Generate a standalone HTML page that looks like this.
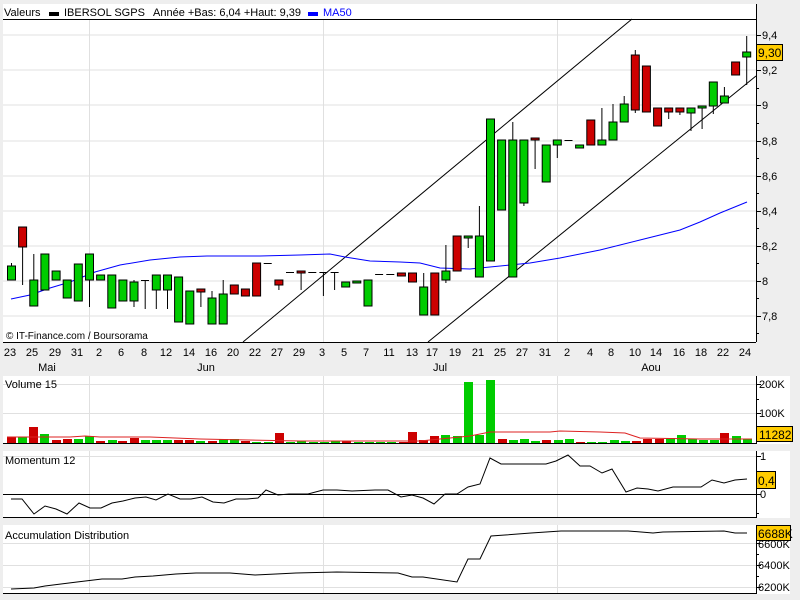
<!DOCTYPE html>
<html><head><meta charset="utf-8"><style>
html,body{margin:0;padding:0;background:#eeeeee;}
svg{display:block;font-family:"Liberation Sans",sans-serif;}
</style></head><body>
<svg width="800" height="600" xmlns="http://www.w3.org/2000/svg">
<rect width="800" height="600" fill="#eeeeee"/>
<!-- main panel -->
<rect x="3" y="4" width="753" height="338" fill="#fff"/>
<g stroke="#e0e0e0" stroke-width="1">
<line x1="3" y1="35" x2="756" y2="35"/><line x1="3" y1="70" x2="756" y2="70"/><line x1="3" y1="105" x2="756" y2="105"/>
<line x1="3" y1="141" x2="756" y2="141"/><line x1="3" y1="176" x2="756" y2="176"/><line x1="3" y1="211" x2="756" y2="211"/>
<line x1="3" y1="246" x2="756" y2="246"/><line x1="3" y1="281" x2="756" y2="281"/><line x1="3" y1="316" x2="756" y2="316"/>
<line x1="89.5" y1="20" x2="89.5" y2="342"/><line x1="323.5" y1="20" x2="323.5" y2="342"/><line x1="557.5" y1="20" x2="557.5" y2="342"/>
</g>
<text x="4" y="16" font-size="11">Valeurs</text>
<rect x="49" y="12" width="10" height="4" fill="#000"/>
<text x="64" y="16" font-size="11">IBERSOL SGPS</text>
<text x="153" y="16" font-size="11">Année +Bas: 6,04 +Haut: 9,39</text>
<rect x="308" y="12" width="10" height="4" fill="#0000ff"/>
<text x="323" y="16" font-size="11" fill="#0000ff">MA50</text>
<line x1="3" y1="19.5" x2="756" y2="19.5" stroke="#000"/>
<!-- trend lines -->
<line x1="243" y1="342" x2="632" y2="19" stroke="#000" stroke-width="1"/>
<line x1="428" y1="342" x2="756" y2="76" stroke="#000" stroke-width="1"/>
<!-- MA50 -->
<polyline fill="none" stroke="#0000ff" stroke-width="1" points="11,299 30,295 50,288 70,282 95,272 120,265 150,260 180,257 207,256 260,256 300,255 330,254 345,257 370,261 400,262 420,263 440,268 470,269 490,267 510,265 530,263 560,258 600,250 640,240 680,230 700,222 720,213 747,202"/>
<!-- candles -->
<g id="candles" stroke="#000" stroke-width="1"></g>
<g stroke="#000" stroke-width="1">
<line x1="11.5" y1="263" x2="11.5" y2="280"/><rect x="7.5" y="266" width="8" height="14" fill="#00cc00"/>
<line x1="22.6" y1="227" x2="22.6" y2="285"/><rect x="18.6" y="227" width="8" height="20" fill="#cc0000"/>
<line x1="33.8" y1="254" x2="33.8" y2="306"/><rect x="29.8" y="280" width="8" height="26" fill="#00cc00"/>
<rect x="40.9" y="254" width="8" height="36" fill="#00cc00"/>
<rect x="52.1" y="271" width="8" height="9" fill="#00cc00"/>
<rect x="63.2" y="280" width="8" height="18" fill="#00cc00"/>
<rect x="74.3" y="264" width="8" height="37" fill="#00cc00"/>
<line x1="89.5" y1="254" x2="89.5" y2="307"/><rect x="85.5" y="254" width="8" height="26" fill="#00cc00"/>
<rect x="96.6" y="275" width="8" height="5" fill="#00cc00"/>
<rect x="107.8" y="275" width="8" height="33" fill="#00cc00"/>
<rect x="118.9" y="280" width="8" height="21" fill="#00cc00"/>
<line x1="134" y1="280" x2="134" y2="307"/><rect x="130" y="282" width="8" height="19" fill="#00cc00"/>
<line x1="145.2" y1="280" x2="145.2" y2="309"/><line x1="141" y1="280.5" x2="149" y2="280.5"/>
<line x1="156.3" y1="275" x2="156.3" y2="309"/><rect x="152.3" y="275" width="8" height="15" fill="#00cc00"/>
<line x1="167.5" y1="275" x2="167.5" y2="309"/><rect x="163.5" y="275" width="8" height="15" fill="#00cc00"/>
<rect x="174.6" y="277" width="8" height="45" fill="#00cc00"/>
<rect x="185.8" y="291" width="8" height="33" fill="#00cc00"/>
<line x1="200.9" y1="289" x2="200.9" y2="307"/><rect x="196.9" y="289" width="8" height="3" fill="#cc0000"/>
<line x1="212" y1="291" x2="212" y2="324"/><rect x="208" y="298" width="8" height="26" fill="#00cc00"/>
<line x1="223.2" y1="280" x2="223.2" y2="324"/><rect x="219.2" y="294" width="8" height="30" fill="#00cc00"/>
<rect x="230.3" y="285" width="8" height="9" fill="#cc0000"/>
<rect x="241.4" y="289" width="8" height="7" fill="#cc0000"/>
<rect x="252.6" y="263" width="8" height="33" fill="#cc0000"/>
<line x1="263.7" y1="263.5" x2="271.7" y2="263.5"/>
<line x1="278.9" y1="280" x2="278.9" y2="290"/><rect x="274.9" y="280" width="8" height="5" fill="#cc0000"/>
<line x1="286" y1="272.5" x2="294" y2="272.5"/>
<line x1="301.1" y1="271" x2="301.1" y2="290"/><rect x="297.1" y="271" width="8" height="2" fill="#cc0000"/>
<line x1="308.3" y1="272.5" x2="316.3" y2="272.5"/>
<line x1="323.4" y1="273" x2="323.4" y2="296"/><line x1="319.4" y1="272.5" x2="327.4" y2="272.5"/>
<line x1="334.6" y1="273" x2="334.6" y2="290"/><line x1="330.6" y1="272.5" x2="338.6" y2="272.5"/>
<rect x="341.7" y="282" width="8" height="5" fill="#00cc00"/>
<rect x="352.8" y="281" width="8" height="2" fill="#00cc00"/>
<rect x="364" y="280" width="8" height="26" fill="#00cc00"/>
<line x1="375.1" y1="274.5" x2="383.1" y2="274.5"/>
<line x1="386.3" y1="274.5" x2="394.3" y2="274.5"/>
<rect x="397.4" y="273" width="8" height="3" fill="#cc0000"/>
<rect x="408.5" y="273" width="8" height="9" fill="#cc0000"/>
<line x1="423.7" y1="273" x2="423.7" y2="315"/><rect x="419.7" y="287" width="8" height="28" fill="#00cc00"/>
<rect x="430.8" y="273" width="8" height="42" fill="#cc0000"/>
<line x1="445.9" y1="245" x2="445.9" y2="283"/><rect x="441.9" y="271" width="8" height="9" fill="#00cc00"/>
<rect x="453.1" y="236" width="8" height="35" fill="#cc0000"/>
<line x1="468.2" y1="236" x2="468.2" y2="248"/><rect x="464.2" y="236" width="8" height="2" fill="#00cc00"/>
<line x1="479.4" y1="206" x2="479.4" y2="277"/><rect x="475.4" y="236" width="8" height="41" fill="#00cc00"/>
<rect x="486.5" y="119" width="8" height="142" fill="#00cc00"/>
<rect x="497.6" y="140" width="8" height="70" fill="#00cc00"/>
<line x1="512.8" y1="122" x2="512.8" y2="277"/><rect x="508.8" y="140" width="8" height="137" fill="#00cc00"/>
<line x1="523.9" y1="140" x2="523.9" y2="206"/><rect x="519.9" y="140" width="8" height="63" fill="#00cc00"/>
<line x1="535.1" y1="138" x2="535.1" y2="169"/><rect x="531.1" y="138" width="8" height="2" fill="#cc0000"/>
<rect x="542.2" y="145" width="8" height="37" fill="#00cc00"/>
<line x1="557.3" y1="140" x2="557.3" y2="158"/><rect x="553.3" y="140" width="8" height="5" fill="#00cc00"/>
<line x1="564.5" y1="140.5" x2="572.5" y2="140.5"/>
<rect x="575.6" y="145" width="8" height="3" fill="#00cc00"/>
<rect x="586.8" y="120" width="8" height="25" fill="#cc0000"/>
<line x1="601.9" y1="108" x2="601.9" y2="145"/><rect x="597.9" y="140" width="8" height="5" fill="#00cc00"/>
<line x1="613" y1="104" x2="613" y2="140"/><rect x="609" y="122" width="8" height="18" fill="#00cc00"/>
<line x1="624.2" y1="96" x2="624.2" y2="122"/><rect x="620.2" y="104" width="8" height="18" fill="#00cc00"/>
<line x1="635.3" y1="50" x2="635.3" y2="113"/><rect x="631.3" y="55" width="8" height="55" fill="#cc0000"/>
<rect x="642.4" y="66" width="8" height="46" fill="#cc0000"/>
<rect x="653.6" y="108" width="8" height="18" fill="#cc0000"/>
<line x1="668.7" y1="108" x2="668.7" y2="119"/><rect x="664.7" y="108" width="8" height="4" fill="#cc0000"/>
<line x1="679.9" y1="108" x2="679.9" y2="115"/><rect x="675.9" y="108" width="8" height="4" fill="#cc0000"/>
<line x1="691" y1="108" x2="691" y2="131"/><rect x="687" y="108" width="8" height="5" fill="#00cc00"/>
<line x1="702.1" y1="106" x2="702.1" y2="129"/><rect x="698.1" y="106" width="8" height="2" fill="#00cc00"/>
<line x1="713.3" y1="82" x2="713.3" y2="114"/><rect x="709.3" y="82" width="8" height="24" fill="#00cc00"/>
<line x1="724.4" y1="87" x2="724.4" y2="103"/><rect x="720.4" y="96" width="8" height="7" fill="#00cc00"/>
<rect x="731.6" y="62" width="8" height="13" fill="#cc0000"/>
<line x1="746.7" y1="36" x2="746.7" y2="85"/><rect x="742.7" y="52" width="8" height="5" fill="#00cc00"/>
</g>
<text x="6" y="339" font-size="10">© IT-Finance.com / Boursorama</text>
<!-- right axis main -->
<line x1="756.5" y1="4" x2="756.5" y2="342" stroke="#000"/>
<g stroke="#000">
<line x1="756" y1="35.5" x2="761" y2="35.5"/><line x1="756" y1="70.5" x2="761" y2="70.5"/><line x1="756" y1="105.5" x2="761" y2="105.5"/>
<line x1="756" y1="141.5" x2="761" y2="141.5"/><line x1="756" y1="176.5" x2="761" y2="176.5"/><line x1="756" y1="211.5" x2="761" y2="211.5"/>
<line x1="756" y1="246.5" x2="761" y2="246.5"/><line x1="756" y1="281.5" x2="761" y2="281.5"/><line x1="756" y1="316.5" x2="761" y2="316.5"/>
<line x1="756" y1="88.5" x2="759" y2="88.5"/><line x1="756" y1="123.5" x2="759" y2="123.5"/><line x1="756" y1="158.5" x2="759" y2="158.5"/>
<line x1="756" y1="193.5" x2="759" y2="193.5"/><line x1="756" y1="228.5" x2="759" y2="228.5"/><line x1="756" y1="263.5" x2="759" y2="263.5"/>
<line x1="756" y1="298.5" x2="759" y2="298.5"/><line x1="756" y1="333.5" x2="759" y2="333.5"/>
</g>
<g font-size="11">
<text x="762" y="39">9,4</text><text x="762" y="74">9,2</text><text x="762" y="109">9</text><text x="762" y="145">8,8</text>
<text x="762" y="180">8,6</text><text x="762" y="215">8,4</text><text x="762" y="250">8,2</text><text x="762" y="285">8</text><text x="762" y="320">7,8</text>
</g>
<rect x="756.5" y="44.5" width="26" height="16" fill="#ffcc00" stroke="#000"/>
<text x="758" y="57" font-size="12">9,30</text>
<!-- date axis -->
<line x1="3" y1="342.5" x2="756" y2="342.5" stroke="#000"/>
<g font-size="11" text-anchor="middle">
<text x="10" y="356">23</text><text x="32" y="356">25</text><text x="55" y="356">29</text><text x="77" y="356">31</text><text x="99" y="356">2</text><text x="121" y="356">6</text><text x="144" y="356">8</text><text x="166" y="356">12</text><text x="189" y="356">14</text><text x="211" y="356">16</text><text x="233" y="356">20</text><text x="255" y="356">22</text><text x="277" y="356">27</text><text x="299" y="356">29</text><text x="322" y="356">3</text><text x="344" y="356">5</text><text x="366" y="356">7</text><text x="389" y="356">11</text><text x="412" y="356">13</text><text x="432" y="356">17</text><text x="455" y="356">19</text><text x="478" y="356">21</text><text x="500" y="356">25</text><text x="522" y="356">27</text><text x="545" y="356">31</text><text x="567" y="356">2</text><text x="590" y="356">4</text><text x="611" y="356">8</text><text x="635" y="356">10</text><text x="656" y="356">14</text><text x="679" y="356">16</text><text x="701" y="356">18</text><text x="723" y="356">22</text><text x="745" y="356">24</text>
<text x="47" y="371">Mai</text><text x="206" y="371">Jun</text><text x="440" y="371">Jul</text><text x="651" y="371">Aou</text>
</g>
<!-- volume panel -->
<rect x="3" y="376" width="787" height="68" fill="#fff"/>
<g stroke="#e0e0e0"><line x1="3" y1="384.5" x2="756" y2="384.5"/><line x1="3" y1="413.5" x2="756" y2="413.5"/>
<line x1="89.5" y1="376" x2="89.5" y2="443"/><line x1="323.5" y1="376" x2="323.5" y2="443"/><line x1="557.5" y1="376" x2="557.5" y2="443"/></g>
<text x="5" y="388" font-size="11">Volume 15</text>
<g>
<rect x="7" y="437" width="9" height="6" fill="#cc0000"/><rect x="18" y="437" width="9" height="6" fill="#00cc00"/><rect x="29" y="427" width="9" height="16" fill="#cc0000"/><rect x="40" y="434" width="9" height="9" fill="#00cc00"/><rect x="52" y="440" width="9" height="3" fill="#cc0000"/><rect x="63" y="439" width="9" height="4" fill="#cc0000"/><rect x="74" y="439" width="9" height="4" fill="#00cc00"/><rect x="85" y="436" width="9" height="7" fill="#00cc00"/><rect x="96" y="441" width="9" height="2" fill="#cc0000"/><rect x="108" y="440" width="9" height="3" fill="#00cc00"/><rect x="118" y="441" width="9" height="2" fill="#cc0000"/><rect x="130" y="438" width="9" height="5" fill="#cc0000"/><rect x="141" y="440" width="9" height="3" fill="#00cc00"/><rect x="152" y="440" width="9" height="3" fill="#00cc00"/><rect x="163" y="440" width="9" height="3" fill="#00cc00"/><rect x="174" y="440" width="9" height="3" fill="#cc0000"/><rect x="185" y="440" width="9" height="3" fill="#cc0000"/><rect x="196" y="441" width="9" height="2" fill="#00cc00"/><rect x="208" y="441" width="9" height="2" fill="#cc0000"/><rect x="219" y="439" width="9" height="4" fill="#00cc00"/><rect x="230" y="439" width="9" height="4" fill="#00cc00"/><rect x="241" y="441" width="9" height="2" fill="#cc0000"/><rect x="252" y="442" width="9" height="1" fill="#00cc00"/><rect x="264" y="442" width="9" height="1" fill="#00cc00"/><rect x="275" y="433" width="9" height="10" fill="#cc0000"/><rect x="286" y="442" width="9" height="1" fill="#00cc00"/><rect x="297" y="441" width="9" height="2" fill="#00cc00"/><rect x="309" y="442" width="9" height="1" fill="#00cc00"/><rect x="320" y="442" width="9" height="1" fill="#00cc00"/><rect x="331" y="441" width="9" height="2" fill="#00cc00"/><rect x="342" y="441" width="9" height="2" fill="#cc0000"/><rect x="354" y="442" width="9" height="1" fill="#00cc00"/><rect x="365" y="442" width="9" height="1" fill="#00cc00"/><rect x="376" y="442" width="9" height="1" fill="#00cc00"/><rect x="387" y="442" width="9" height="1" fill="#00cc00"/><rect x="399" y="442" width="9" height="1" fill="#cc0000"/><rect x="408" y="432" width="9" height="11" fill="#cc0000"/><rect x="419" y="440" width="9" height="3" fill="#cc0000"/><rect x="430" y="436" width="9" height="7" fill="#cc0000"/><rect x="441" y="435" width="9" height="8" fill="#00cc00"/><rect x="453" y="436" width="9" height="7" fill="#00cc00"/><rect x="464" y="382" width="9" height="61" fill="#00cc00"/><rect x="475" y="435" width="9" height="8" fill="#00cc00"/><rect x="486" y="380" width="9" height="63" fill="#00cc00"/><rect x="498" y="439" width="9" height="4" fill="#cc0000"/><rect x="509" y="440" width="9" height="3" fill="#00cc00"/><rect x="520" y="439" width="9" height="4" fill="#00cc00"/><rect x="531" y="441" width="9" height="2" fill="#00cc00"/><rect x="542" y="440" width="9" height="3" fill="#cc0000"/><rect x="554" y="440" width="9" height="3" fill="#00cc00"/><rect x="565" y="439" width="9" height="4" fill="#00cc00"/><rect x="576" y="442" width="9" height="1" fill="#cc0000"/><rect x="587" y="442" width="9" height="1" fill="#00cc00"/><rect x="598" y="442" width="9" height="1" fill="#00cc00"/><rect x="610" y="440" width="9" height="3" fill="#00cc00"/><rect x="621" y="441" width="9" height="2" fill="#00cc00"/><rect x="632" y="441" width="9" height="2" fill="#cc0000"/><rect x="643" y="439" width="9" height="4" fill="#cc0000"/><rect x="655" y="439" width="9" height="4" fill="#cc0000"/><rect x="666" y="438" width="9" height="5" fill="#00cc00"/><rect x="677" y="435" width="9" height="8" fill="#00cc00"/><rect x="688" y="439" width="9" height="4" fill="#00cc00"/><rect x="699" y="440" width="9" height="3" fill="#00cc00"/><rect x="710" y="440" width="9" height="3" fill="#00cc00"/><rect x="720" y="433" width="9" height="10" fill="#cc0000"/><rect x="732" y="436" width="9" height="7" fill="#00cc00"/><rect x="743" y="439" width="9" height="4" fill="#00cc00"/>
</g>
<polyline fill="none" stroke="#dd2222" stroke-width="1" points="7,437 70,437 85,436 100,437 150,437 200,439 300,441 420,441 450,438 470,436 490,432 550,432 560,431 600,432 625,433 640,438 700,439 752,439"/>
<line x1="3" y1="443.5" x2="756" y2="443.5" stroke="#000"/>
<line x1="756.5" y1="376" x2="756.5" y2="444" stroke="#000"/>
<g stroke="#000"><line x1="756" y1="384.5" x2="761" y2="384.5"/><line x1="756" y1="413.5" x2="761" y2="413.5"/><line x1="756" y1="399.5" x2="759" y2="399.5"/><line x1="756" y1="427.5" x2="759" y2="427.5"/></g>
<text x="759" y="388" font-size="11">200K</text><text x="759" y="417" font-size="11">100K</text>
<rect x="756.5" y="426.5" width="36" height="15" fill="#ffcc00" stroke="#000"/>
<text x="759" y="439" font-size="12">11282</text>
<!-- momentum panel -->
<rect x="3" y="451" width="787" height="67" fill="#fff"/>
<g stroke="#e0e0e0"><line x1="3" y1="456.5" x2="756" y2="456.5"/>
<line x1="89.5" y1="451" x2="89.5" y2="518"/><line x1="323.5" y1="451" x2="323.5" y2="518"/><line x1="557.5" y1="451" x2="557.5" y2="518"/></g>
<text x="5" y="464" font-size="11">Momentum 12</text>
<line x1="3" y1="494.5" x2="756" y2="494.5" stroke="#000"/>
<polyline fill="none" stroke="#000" points="11,499 22,499 34,514 45,506 56,509 67,514 79,503 90,508 101,508 112,503 123,501 135,498 146,497 156,500 168,494 180,499 191,499 202,497 213,502 224,503 236,499 247,499 258,498 266,490 278,495 289,494 308,494 323,490 337,490 352,491 375,490 388,490 401,497 412,495 423,498 434,504 445,494 457,494 468,487 480,484 490,458 501,464 510,464 546,464 556,461 568,455 580,466 590,466 602,473 612,469 626,492 637,488 648,489 658,491 673,487 701,487 712,480 724,483 735,480 747,479"/>
<line x1="3" y1="517.5" x2="756" y2="517.5" stroke="#000"/>
<line x1="756.5" y1="451" x2="756.5" y2="518" stroke="#000"/>
<g stroke="#000"><line x1="756" y1="456.5" x2="761" y2="456.5"/><line x1="756" y1="475.5" x2="759" y2="475.5"/><line x1="756" y1="494.5" x2="761" y2="494.5"/><line x1="756" y1="513.5" x2="759" y2="513.5"/></g>
<text x="760" y="460" font-size="11">1</text><text x="760" y="498" font-size="11">0</text>
<rect x="756.5" y="471.5" width="19" height="17" fill="#ffcc00" stroke="#000"/>
<text x="758" y="485" font-size="12">0,4</text>
<!-- AD panel -->
<rect x="3" y="525" width="787" height="69" fill="#fff"/>
<g stroke="#e0e0e0"><line x1="3" y1="543.5" x2="756" y2="543.5" /><line x1="3" y1="565.5" x2="756" y2="565.5"/><line x1="3" y1="587.5" x2="756" y2="587.5"/>
<line x1="89.5" y1="525" x2="89.5" y2="594"/><line x1="323.5" y1="525" x2="323.5" y2="594"/><line x1="557.5" y1="525" x2="557.5" y2="594"/></g>
<text x="5" y="539" font-size="11">Accumulation Distribution</text>
<polyline fill="none" stroke="#000" points="11,589 34,588 45,586 77,582 102,579 122,579 135,577 153,576 176,574 196,573 230,573 255,575 276,574 296,573 337,572 398,573 412,577 423,577 457,582 468,559 480,559 491,536 505,535 531,533 561,531 628,531 653,533 663,532 724,531 735,533 747,533"/>
<line x1="3" y1="593.5" x2="756" y2="593.5" stroke="#000"/>
<line x1="756.5" y1="525" x2="756.5" y2="594" stroke="#000"/>
<g stroke="#000"><line x1="756" y1="532.5" x2="759" y2="532.5"/><line x1="756" y1="543.5" x2="761" y2="543.5"/><line x1="756" y1="554.5" x2="759" y2="554.5"/><line x1="756" y1="565.5" x2="761" y2="565.5"/><line x1="756" y1="576.5" x2="759" y2="576.5"/><line x1="756" y1="587.5" x2="761" y2="587.5"/></g>
<text x="758" y="548" font-size="11">6600K</text><text x="758" y="569" font-size="11">6400K</text><text x="758" y="591" font-size="11">6200K</text>
<rect x="756.5" y="525.5" width="34" height="15" fill="#ffcc00" stroke="#000"/>
<text x="758" y="538" font-size="12">6688K</text>
</svg>
</body></html>
